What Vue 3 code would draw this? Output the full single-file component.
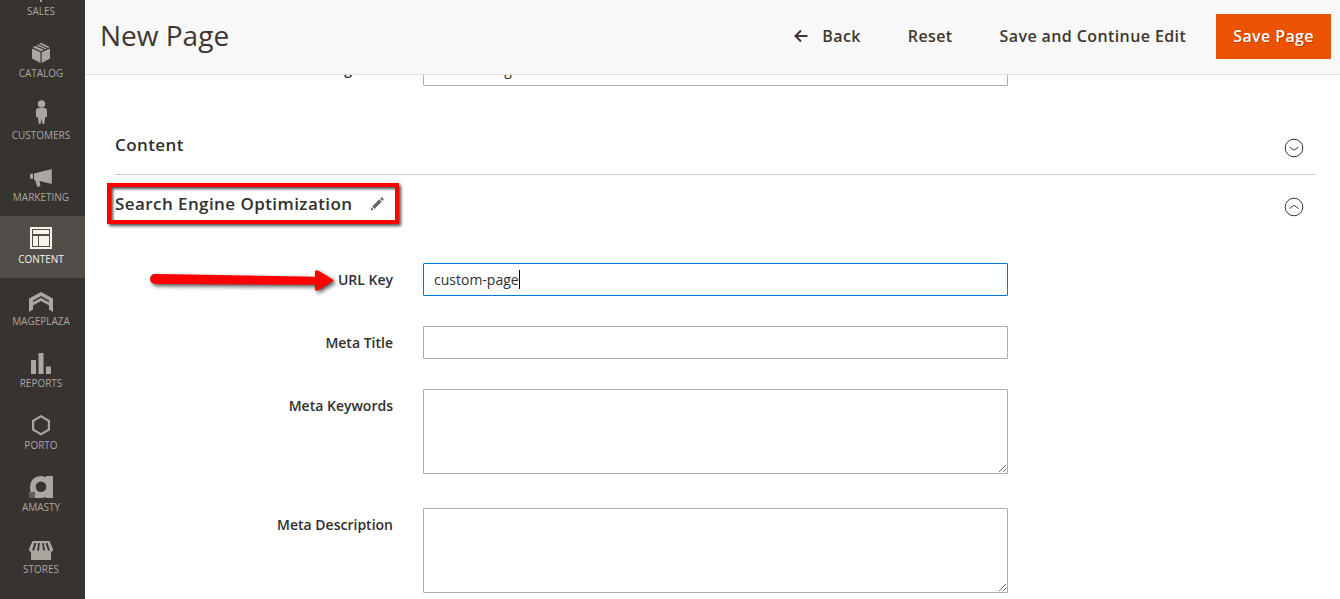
<template>
  <div class="admin">
    <nav class="menu">
      <a
        v-for="item in menu"
        :key="item.label"
        href="#"
        class="menu-item"
        :class="{ 'menu-item--active': item.label === 'Content', 'menu-item--cut': item.label === 'Sales' }"
      >
        <svg class="menu-icon" viewBox="0 0 24 24" width="24" height="24" aria-hidden="true">
          <path v-for="(p, i) in item.paths" :key="i" :d="p.d || p" :fill="p.fill || 'currentColor'" fill-rule="evenodd" />
        </svg>
        <span class="menu-label">{{ item.label }}</span>
      </a>
    </nav>

    <div class="page">
      <header class="page-header">
        <h1 class="page-title">New Page</h1>
        <div class="page-actions">
          <button type="button" class="btn">
            <svg class="back-icon" viewBox="0 0 14 14" width="14" height="14" aria-hidden="true">
              <path d="M13.5 7H1.5M7 1.5L1.5 7L7 12.5" />
            </svg>
            Back
          </button>
          <button type="button" class="btn">Reset</button>
          <button type="button" class="btn">Save and Continue Edit</button>
          <button type="button" class="btn btn--primary">Save Page</button>
        </div>
      </header>

      <main class="content">
        <div class="field field--cut">
          <label class="field-label" for="page-title">Page Title</label>
          <input id="page-title" v-model="form.title" class="control" type="text" />
        </div>

        <section class="section">
          <div class="section-head">
            <h2 class="section-title">Content</h2>
            <button type="button" class="toggle" aria-label="Expand Content">
              <svg viewBox="0 0 20 20" width="20" height="20">
                <circle cx="10" cy="10" r="8.8" />
                <path d="M5.5 9L10 12.200L14.500 9" />
              </svg>
            </button>
          </div>
        </section>

        <section class="section">
          <div class="section-head">
            <h2 class="section-title section-title--marked">
              Search Engine Optimization
              <svg class="pencil" viewBox="0 0 14 14" width="14" height="14" aria-hidden="true">
                <path d="M0.6 13.4L1.4 10.2L3.8 12.6ZM2.1 9.5L9.3 2.3L11.7 4.7L4.5 11.9ZM10.1 1.6L11.3 0.5Q11.8 0.1 12.3 0.6L13.4 1.7Q13.9 2.2 13.5 2.7L12.4 3.9Z" />
              </svg>
            </h2>
            <button type="button" class="toggle" aria-label="Collapse Search Engine Optimization">
              <svg viewBox="0 0 20 20" width="20" height="20">
                <circle cx="10" cy="10" r="8.8" />
                <path d="M5.500 11.500L10 8.300L14.500 11.500" />
              </svg>
            </button>
          </div>

          <div class="fields">
            <div class="field">
              <label class="field-label" for="url-key">URL Key</label>
              <div class="control-wrap">
                <input id="url-key" v-model="form.urlKey" class="control control--focus" type="text" />
                <span class="caret"></span>
              </div>
              <svg class="pointer" viewBox="0 0 190 30" width="190" height="30" aria-hidden="true">
                <path d="M7 6L167 8.700V4Q167 1.500 170 2.500L184 11Q187 12.500 184 14L170 22.200Q167 23.500 167 21V16.700L7 16A5 5 0 0 1 7 6Z" />
              </svg>
            </div>
            <div class="field">
              <label class="field-label" for="meta-title">Meta Title</label>
              <input id="meta-title" v-model="form.metaTitle" class="control" type="text" />
            </div>
            <div class="field">
              <label class="field-label" for="meta-keywords">Meta Keywords</label>
              <textarea id="meta-keywords" v-model="form.metaKeywords" class="control control--area"></textarea>
            </div>
            <div class="field">
              <label class="field-label" for="meta-description">Meta Description</label>
              <textarea id="meta-description" v-model="form.metaDescription" class="control control--area"></textarea>
            </div>
          </div>
        </section>
      </main>
    </div>
  </div>
</template>

<script setup>
import { reactive } from 'vue'

const form = reactive({
  title: 'Custom Page',
  urlKey: 'custom-page',
  metaTitle: '',
  metaKeywords: '',
  metaDescription: ''
})

const menu = [
  { label: 'Sales', paths: ['M11 2h2v22h-2z'] },
  {
    label: 'Catalog',
    paths: [
      'M3 8.500L11.500 12.300V23L3 18.500Z',
      'M12.700 12.300L21 8.500V18.500L12.700 23Z',
      'M3.500 7.300L6.300 5.900L14.800 9.800L12 11.200Z',
      'M7.500 5.300L9.200 4.500L17.800 8.400L16 9.200Z',
      'M10.200 3.800L12 2.800L20.700 7.100L19 7.900Z'
    ]
  },
  {
    label: 'Customers',
    paths: [
      'M12.500 -1.700a3.700 3.700 0 1 1 0 7.400a3.700 3.700 0 1 1 0-7.400z',
      'M9.500 6H15.500Q18 6 18 8.500V15H16.200L15.200 22H13.500L12.500 17L11.500 22H9.800L8.800 15H7V8.500Q7 6 9.500 6Z'
    ]
  },
  {
    label: 'Marketing',
    paths: ['M1 10L4 9.500V15L1 14.500Z', 'M5 9.500L22.800 5V20L10.500 17L11.500 22L8.500 23L6 16L5 15.800Z']
  },
  {
    label: 'Content',
    paths: ['M1 1H23V23H1ZM3 3V21H21V3Z', 'M4 4H20V8H4Z', 'M4 10H9V20H4Z', 'M10 10H20V20H10Z']
  },
  {
    label: 'Mageplaza',
    paths: ['M0 10.500L12 4L24 10.500V24L20 21.500V17.500L12 13L4 17.500V21.500L0 24ZM4 14.300L12 9.800L20 14.300V12.500L12 8L4 12.500Z']
  },
  { label: 'Reports', paths: ['M2 10H7V24H2Z', 'M9.500 3H14.500V24H9.500Z', 'M17 16.500H22V24H17Z'] },
  { label: 'Porto', paths: ['M12 3L21 8.200V18.300L12 23.500L3 18.300V8.200ZM12 5.500L5.200 9.500V17L12 21L18.800 17V9.500Z'] },
  {
    label: 'Amasty',
    paths: [
      'M12 2Q15 2 17 3.500V2H24V24H17V23Q15 24 12 24H6V18H1.500Q1 15 1 12.500Q2 2 12 2ZM12 7.500a5.300 5.300 0 1 0 0 10.600a5.300 5.300 0 1 0 0-10.600z',
      { d: 'M0 18H6V24H0Z', fill: '#5f6062' }
    ]
  },
  {
    label: 'Stores',
    paths: [
      'M2 16H22V24H2Z',
      'M3.500 5H20.500L24 13Q24 16 21.500 16H2.500Q0 16 0 13ZM5.500 7L3 14.500H5L7.500 7ZM9.300 7L8 14.500H10L10.800 7ZM13.200 7L14 14.500H16L14.700 7ZM16.500 7L19 14.500H21L18.500 7Z'
    ]
  }
]
</script>

<style>
body {
  background: #ffffff;
}
</style>

<style scoped>
.admin {
  display: flex;
  height: 100vh;
  overflow: hidden;
  font-family: 'Open Sans', 'Noto Sans', sans-serif;
  font-size: 14px;
  color: #303030;
}

.admin * {
  box-sizing: border-box;
}

.menu {
  flex: none;
  width: 85px;
  background: #373330;
}

.menu-item {
  display: flex;
  flex-direction: column;
  align-items: center;
  justify-content: flex-end;
  gap: 1px;
  height: 62px;
  padding: 0 3px 11px 0;
  color: #aaa6a0;
  text-decoration: none;
}

.menu-item--cut {
  height: 30px;
  overflow: hidden;
}

.menu-item--active {
  background: #524d49;
  color: #f7f3eb;
}

.menu-icon {
  flex: none;
  overflow: visible;
}

.menu-label {
  font-size: 10px;
  line-height: 16px;
  text-transform: uppercase;
}

.page {
  flex: 1;
  min-width: 0;
}

.page-header {
  display: flex;
  align-items: center;
  justify-content: space-between;
  height: 75px;
  padding: 0 9px 2px 15px;
  background: #f8f8f8;
  border-bottom: 1px solid #e3e3e3;
}

.page-title {
  margin: 0;
  padding-bottom: 2px;
  font-size: 28px;
  font-weight: 400;
  line-height: 36px;
  color: #41362f;
}

.page-actions {
  display: flex;
  align-items: center;
}

.btn {
  display: flex;
  align-items: center;
  height: 45px;
  padding: 0 17px;
  margin-left: 13px;
  border: none;
  background: none;
  font-family: inherit;
  font-size: 16px;
  font-weight: 600;
  letter-spacing: 0.025em;
  color: #41362f;
  cursor: pointer;
}

.btn--primary {
  background: #eb5202;
  color: #ffffff;
  text-shadow: 1px 1px 0 rgba(0, 0, 0, 0.25);
}

.back-icon {
  margin-right: 14px;
  fill: none;
  stroke: #41362f;
  stroke-width: 2;
}

.content {
  padding: 0 24px 0 30px;
}

.section {
  border-bottom: 1px solid #cccccc;
}

.section-head {
  display: flex;
  align-items: center;
  justify-content: space-between;
  height: 58px;
}

.section-title {
  position: relative;
  display: flex;
  align-items: center;
  gap: 17px;
  margin: 0;
  font-size: 17px;
  font-weight: 600;
  line-height: 24px;
  letter-spacing: 0.025em;
}

/* highlight frame */
.section-title--marked::after {
  content: '';
  position: absolute;
  inset: -9px -15px -8px -8px;
  border: 4px solid #fe0000;
  box-shadow: 2px 2px 3px #000000b3, inset 2px 2px 3px #000000b3;
}

.pencil {
  fill: #666666;
}

.toggle {
  display: flex;
  margin-right: 12px;
  padding: 6px 0 0;
  border: none;
  background: none;
  cursor: pointer;
}

.toggle svg {
  fill: none;
  stroke: #41362f;
  stroke-width: 1;
}

.fields {
  display: flex;
  flex-direction: column;
  gap: 30px;
  padding: 30px 0;
}

.field {
  position: relative;
  display: grid;
  grid-template-columns: 278fr 585fr 278fr;
  gap: 30px;
  align-items: start;
}

.field--cut {
  height: 11px;
  margin-bottom: 30px;
  align-items: end;
  align-content: end;
  overflow: hidden;
}

.field-label {
  font-size: 14px;
  font-weight: 600;
  line-height: 33px;
  text-align: right;
}

.control-wrap {
  position: relative;
}

.control {
  display: block;
  width: 100%;
  height: 33px;
  padding: 0 10px;
  border: 1px solid #adadad;
  border-radius: 1px;
  background: #ffffff;
  font-family: inherit;
  font-size: 14px;
  color: #303030;
}

.control--focus {
  border-color: #007bdb;
}

.control--area {
  height: 85px;
  margin-bottom: 4px;
  resize: vertical;
}

.caret {
  position: absolute;
  top: 7px;
  left: 96px;
  width: 1px;
  height: 19px;
  background: #000000;
}

.pointer {
  position: absolute;
  top: 5px;
  left: 33px;
  fill: #fe0000;
  filter: drop-shadow(2px 2px 2px #000000b3);
}
</style>
